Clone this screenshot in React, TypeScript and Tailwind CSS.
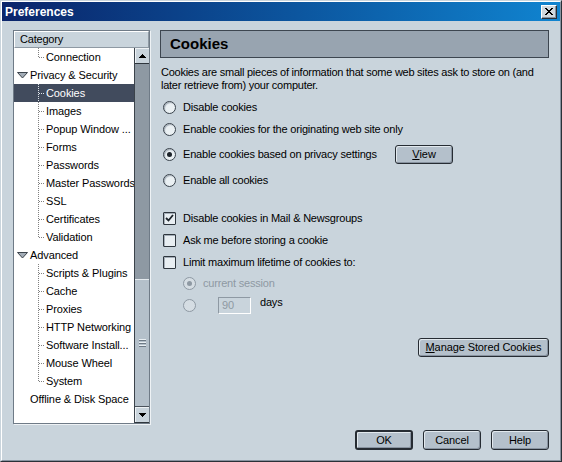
import React from "react";
import clsx from "clsx";

type TreeRow = {
  label: string;
  kind: "parent" | "child" | "top";
  last?: boolean;
  selected?: boolean;
};

const rows: TreeRow[] = [
  { label: "Connection", kind: "child", last: true },
  { label: "Privacy & Security", kind: "parent" },
  { label: "Cookies", kind: "child", selected: true },
  { label: "Images", kind: "child" },
  { label: "Popup Window ...", kind: "child" },
  { label: "Forms", kind: "child" },
  { label: "Passwords", kind: "child" },
  { label: "Master Passwords", kind: "child" },
  { label: "SSL", kind: "child" },
  { label: "Certificates", kind: "child" },
  { label: "Validation", kind: "child", last: true },
  { label: "Advanced", kind: "parent" },
  { label: "Scripts & Plugins", kind: "child" },
  { label: "Cache", kind: "child" },
  { label: "Proxies", kind: "child" },
  { label: "HTTP Networking", kind: "child" },
  { label: "Software Install...", kind: "child" },
  { label: "Mouse Wheel", kind: "child" },
  { label: "System", kind: "child", last: true },
  { label: "Offline & Disk Space", kind: "top" },
];

function Branch({ last, light }: { last?: boolean; light?: boolean }) {
  const c = light ? "#dfe5ea" : "#808080";
  return (
    <svg width="7" height="18" className="shrink-0" shapeRendering="crispEdges">
      <line x1="0.5" y1="0" x2="0.5" y2={last ? 10 : 18} stroke={c} strokeDasharray="1 1" />
      <line x1="1" y1="9.5" x2="7" y2="9.5" stroke={c} strokeDasharray="1 1" />
    </svg>
  );
}

function Twisty() {
  return (
    <svg width="11" height="7" className="shrink-0">
      <path d="M0.5 0.5 H10.5 L5.5 6 Z" fill="#a3adb7" stroke="#3c444c" />
    </svg>
  );
}

function Arrow({ up }: { up?: boolean }) {
  return (
    <div className="flex h-[16px] shrink-0 items-center justify-center border-b border-[#2f363d] bg-[#c9d4dc] shadow-[inset_1px_1px_0_#eef2f5]">
      <svg width="7" height="4" shapeRendering="crispEdges">
        <path d={up ? "M3.5 0 L7 4 L0 4 Z" : "M0 0 L7 0 L3.5 4 Z"} fill="#000" />
      </svg>
    </div>
  );
}

function Scrollbar() {
  return (
    <div className="flex w-[15px] shrink-0 flex-col border-l border-[#3b434b] bg-[#8e99a3]">
      <Arrow up />
      <div className="flex-1" />
      <div className="flex h-[128px] shrink-0 items-center justify-center border-t border-b border-t-[#e4eaee] border-b-[#4a535c] bg-[#b4c0ca]">
        <div className="flex flex-col gap-[1px]">
          {[0, 1, 2].map((i) => (
            <div key={i} className="h-[2px] w-[7px] border-t border-b border-t-[#e8eef2] border-b-[#6e7a86]" />
          ))}
        </div>
      </div>
      <Arrow />
    </div>
  );
}

function Radio({ checked, disabled }: { checked?: boolean; disabled?: boolean }) {
  return (
    <span
      className={clsx(
        "flex h-[13px] w-[13px] shrink-0 items-center justify-center rounded-full border",
        disabled
          ? "border-[#8e99a3] bg-[#d5dde3]"
          : "border-[#39424b] bg-[#eaf0f3] shadow-[inset_1px_1px_1px_#a4aeb8]"
      )}
    >
      {checked && (
        <span className={clsx("h-[5px] w-[5px] rounded-full", disabled ? "bg-[#8e99a3]" : "bg-[#1c232a]")} />
      )}
    </span>
  );
}

function Check({ checked }: { checked?: boolean }) {
  return (
    <span className="flex h-[13px] w-[13px] shrink-0 items-center justify-center rounded-[1px] border border-[#2e363e] bg-[#e8eef2] shadow-[inset_1px_1px_0_#a4aeb8]">
      {checked && (
        <svg width="9" height="8">
          <polyline points="1,4 3.5,6.5 8,1" fill="none" stroke="#1c232a" strokeWidth="1.8" />
        </svg>
      )}
    </span>
  );
}

function Button({ children, className, def }: { children: React.ReactNode; className?: string; def?: boolean }) {
  return (
    <button
      className={clsx(
        "flex items-center justify-center rounded-[3px] border-[#262c33] bg-[#b4c0cb] text-[11px] tracking-[-0.1px] shadow-[inset_1px_1px_0_#e2e9ee,inset_-1px_-1px_0_#8893a0]",
        def ? "border-2" : "border",
        className
      )}
    >
      {children}
    </button>
  );
}

export default function App() {
  return (
    <div className="h-[462px] w-[562px] border border-t-[#c9d4dc] border-l-[#c9d4dc] border-r-[#2a3138] border-b-[#2a3138] font-['Liberation_Sans',Arial,sans-serif] text-[11px] text-black">
      <div className="flex h-full flex-col border border-t-white border-l-white border-r-[#8893a0] border-b-[#8893a0] bg-[#c9d4dc]">
        {/* title bar */}
        <div className="flex h-[19px] shrink-0 items-center justify-between bg-gradient-to-r from-[#0a246a] to-[#1084d0] pl-[3px] pr-[3px]">
          <span className="text-[12px] font-bold text-white">Preferences</span>
          <div className="flex h-[14px] w-[16px] items-center justify-center border border-t-white border-l-white border-r-[#2a3138] border-b-[#2a3138] bg-[#d0d8de] shadow-[inset_-1px_-1px_0_#8893a0]">
            <svg width="8" height="7" shapeRendering="crispEdges">
              <rect x="0" y="0" width="2" height="1" />
              <rect x="6" y="0" width="2" height="1" />
              <rect x="1" y="1" width="2" height="1" />
              <rect x="5" y="1" width="2" height="1" />
              <rect x="2" y="2" width="4" height="1" />
              <rect x="3" y="3" width="2" height="1" />
              <rect x="2" y="4" width="4" height="1" />
              <rect x="1" y="5" width="2" height="1" />
              <rect x="5" y="5" width="2" height="1" />
              <rect x="0" y="6" width="2" height="1" />
              <rect x="6" y="6" width="2" height="1" />
            </svg>
          </div>
        </div>

        <div className="flex flex-1 flex-col pt-[9px] pl-[11px] pr-[11px] pb-[10px]">
          <div className="flex h-[394px] gap-[10px]">
            {/* category tree */}
            <div className="flex w-[137px] shrink-0 flex-col border border-[#6f7b87] bg-white shadow-[1px_1px_0_#eef2f5]">
              <div className="flex h-[17px] shrink-0 items-center border border-t-white border-l-white border-r-[#8e99a3] border-b-[#8e99a3] bg-[#c9d4dc] pl-[5px] tracking-[-0.2px]">
                Category
              </div>
              <div className="flex min-h-0 flex-1">
                <div className="flex-1 overflow-hidden tracking-[-0.1px]">
                  {rows.map((r) => (
                    <div
                      key={r.label}
                      className={clsx(
                        "flex h-[18px] items-center whitespace-nowrap",
                        r.selected ? "bg-[#414b5d] text-white" : "",
                        r.kind === "child" ? "pl-[24px]" : r.kind === "parent" ? "pl-[3px]" : "pl-[16px]"
                      )}
                    >
                      {r.kind === "child" && <Branch last={r.last} light={r.selected} />}
                      {r.kind === "parent" && <Twisty />}
                      <span className={r.kind === "child" ? "ml-px" : r.kind === "parent" ? "ml-[2px]" : ""}>
                        {r.label}
                      </span>
                    </div>
                  ))}
                </div>
                <Scrollbar />
              </div>
            </div>

            {/* cookies panel */}
            <div className="flex min-w-0 flex-1 flex-col tracking-[-0.2px]">
              <div className="flex h-[28px] shrink-0 items-center border border-[#3d4650] bg-[#98a4b0] pl-[9px] text-[15px] font-bold tracking-normal">
                Cookies
              </div>
              <p className="mt-[8px] pl-px leading-[13px] tracking-[-0.25px]">
                Cookies are small pieces of information that some web sites ask to store on (and
                <br />
                later retrieve from) your computer.
              </p>

              <div className="mt-[5px] flex flex-col pl-[3px]">
                <div className="flex h-[21px] items-center gap-[7px]">
                  <Radio />
                  <span>Disable cookies</span>
                </div>
                <div className="flex h-[22px] items-center gap-[7px]">
                  <Radio />
                  <span>Enable cookies for the originating web site only</span>
                </div>
                <div className="flex h-[28px] items-center gap-[7px]">
                  <Radio checked />
                  <span className="w-[205px]">Enable cookies based on privacy settings</span>
                  <Button className="h-[19px] w-[58px]">
                    <u>V</u>iew
                  </Button>
                </div>
                <div className="flex h-[24px] items-center gap-[7px]">
                  <Radio />
                  <span>Enable all cookies</span>
                </div>
              </div>

              <div className="mt-[15px] flex flex-col pl-[3px]">
                <div className="flex h-[22px] items-center gap-[7px]">
                  <Check checked />
                  <span>Disable cookies in Mail &amp; Newsgroups</span>
                </div>
                <div className="flex h-[22px] items-center gap-[7px]">
                  <Check />
                  <span>Ask me before storing a cookie</span>
                </div>
                <div className="flex h-[22px] items-center gap-[7px]">
                  <Check />
                  <span>Limit maximum lifetime of cookies to:</span>
                </div>
                <div className="flex h-[21px] items-center gap-[7px] pl-[20px] text-[#8e99a3]">
                  <Radio checked disabled />
                  <span>current session</span>
                </div>
                <div className="flex h-[23px] items-center pl-[20px] text-[#8e99a3]">
                  <Radio disabled />
                  <div className="ml-[22px] flex h-[17px] w-[33px] items-center border border-t-[#8e99a3] border-l-[#8e99a3] border-r-white border-b-white pl-[3px]">
                    90
                  </div>
                  <span className="mb-[7px] ml-[9px] text-black">days</span>
                </div>
              </div>

              <div className="mt-[21px] flex justify-end">
                <Button className="h-[19px] w-[131px]">
                  <u>M</u>anage Stored Cookies
                </Button>
              </div>
            </div>
          </div>

          <div className="mt-[6px] flex justify-end gap-[10px]">
            <Button def className="h-[20px] w-[58px]">
              OK
            </Button>
            <Button className="h-[20px] w-[58px]">Cancel</Button>
            <Button className="h-[20px] w-[58px]">Help</Button>
          </div>
        </div>
      </div>
    </div>
  );
}
